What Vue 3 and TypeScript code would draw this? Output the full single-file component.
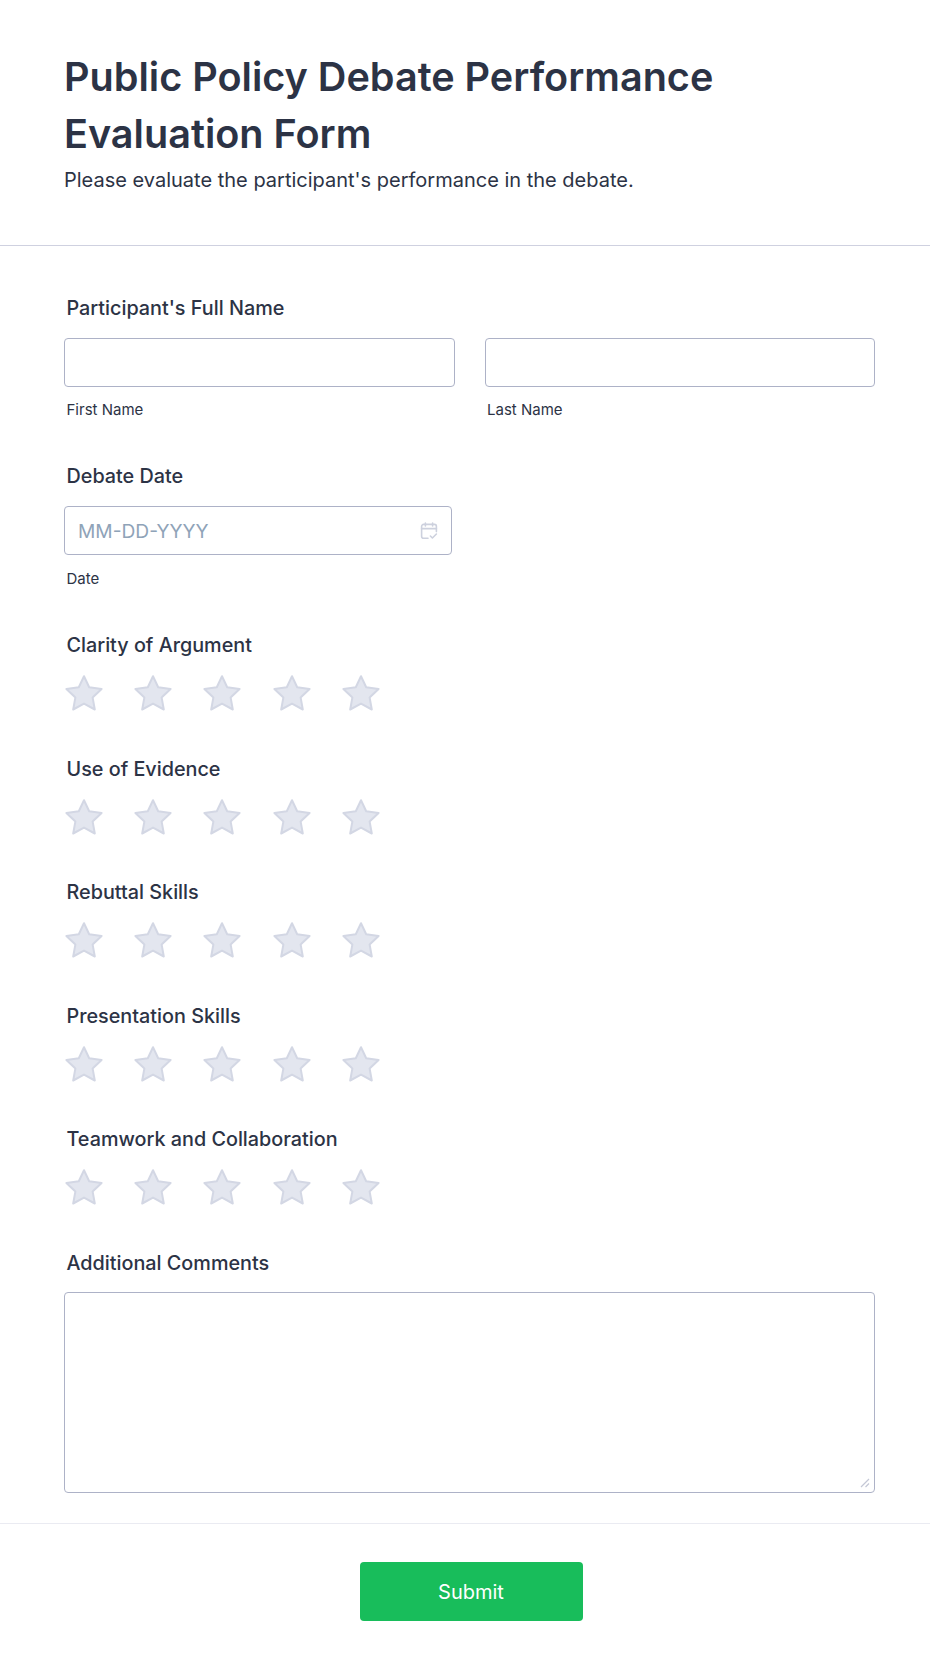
<script setup lang="ts">
const ratings = [
  'Clarity of Argument',
  'Use of Evidence',
  'Rebuttal Skills',
  'Presentation Skills',
  'Teamwork and Collaboration',
]
const stars = [1, 2, 3, 4, 5]
</script>

<template>
  <main class="form">
    <header class="form-header">
      <h1>Public Policy Debate Performance Evaluation Form</h1>
      <p>Please evaluate the participant's performance in the debate.</p>
    </header>

    <section class="form-body">
      <div class="field field-name">
        <label class="field-label">Participant's Full Name</label>
        <div class="name-row">
          <div class="name-col">
            <input class="text-input" type="text" aria-label="First Name" />
            <span class="sublabel">First Name</span>
          </div>
          <div class="name-col">
            <input class="text-input" type="text" aria-label="Last Name" />
            <span class="sublabel">Last Name</span>
          </div>
        </div>
      </div>

      <div class="field field-date">
        <label class="field-label">Debate Date</label>
        <div class="date-box">
          <span class="date-placeholder">MM-DD-YYYY</span>
          <svg class="date-icon" width="18" height="18" viewBox="0 0 18 18" fill="none" stroke="#cdd1de" stroke-width="1.6" stroke-linecap="round" stroke-linejoin="round">
            <path d="M8 16.2H3.6a2 2 0 0 1-2-2V4.4a2 2 0 0 1 2-2h10.8a2 2 0 0 1 2 2v5.2" />
            <path d="M1.6 6.6h14.8M5.4 1v3M12.6 1v3" />
            <path d="M10.4 14l2 2 4-4" />
          </svg>
        </div>
        <span class="sublabel sublabel-date">Date</span>
      </div>

      <div v-for="name in ratings" :key="name" class="field field-rating">
        <label class="field-label">{{ name }}</label>
        <div class="star-row">
          <svg v-for="n in stars" :key="n" class="star" width="40" height="38" viewBox="0 0 40 38">
            <path
              d="M20 2.2l5.2 11 12.4 1.7-9 8.5 2.2 12.1L20 29.6 9.2 35.5l2.2-12.1-9-8.5 12.4-1.7z"
              fill="#e3e6ef"
              stroke="#d3d7e4"
              stroke-width="2"
              stroke-linejoin="round"
            />
          </svg>
        </div>
      </div>

      <div class="field field-comments">
        <label class="field-label">Additional Comments</label>
        <div class="comments">
          <svg class="resize-grip" width="10" height="10" viewBox="0 0 10 10" fill="none" stroke="#c4c8d6" stroke-width="1.2">
            <path d="M1 9l8-8M5.5 9L9 5.5" />
          </svg>
        </div>
      </div>
    </section>

    <footer class="form-footer">
      <button class="submit" type="button">Submit</button>
    </footer>
  </main>
</template>

<style scoped>
.form {
  width: 930px;
  height: 1671px;
  overflow: hidden;
  background: #fff;
  color: #2c3345;
  font-family: Inter, "Liberation Sans", sans-serif;
}

.form-header {
  height: 246px;
  padding: 49px 64px 0;
  border-bottom: 1px solid #cfd1e0;
  box-sizing: border-box;
}

.form-header h1 {
  margin: 0;
  width: 720px;
  font-size: 39.6px;
  line-height: 57px;
  font-weight: 600;
}

.form-header p {
  margin: 2px 0 0;
  font-size: 20px;
  line-height: 30px;
}

.form-body {
  padding: 0 55px 0 64px;
}

.field-label {
  display: block;
  margin-left: 2.5px;
  font-size: 19.8px;
  line-height: 24px;
  font-weight: 500;
}

.field-name {
  padding-top: 50px;
}

.name-row {
  display: flex;
  gap: 30px;
  margin-top: 18px;
}

.name-col {
  flex: 1;
  min-width: 0;
}

.text-input {
  display: block;
  width: 100%;
  height: 49px;
  box-sizing: border-box;
  border: 1px solid #adb2c7;
  border-radius: 4px;
  background: #fff;
}

.sublabel {
  display: block;
  margin: 14px 0 0 2.5px;
  font-size: 15px;
  line-height: 18px;
}

.sublabel-date {
  margin-top: 15px;
}

.field-date {
  margin-top: 45px;
}

.date-box {
  display: flex;
  align-items: center;
  justify-content: space-between;
  width: 388px;
  height: 49px;
  margin-top: 18px;
  padding: 0 13px;
  box-sizing: border-box;
  border: 1px solid #adb2c7;
  border-radius: 4px;
}

.date-placeholder {
  font-size: 19.2px;
  color: #8fa3b8;
}

.field-rating {
  margin-top: 44.6px;
}

.field-date + .field-rating {
  margin-top: 45px;
}

.star-row {
  display: flex;
  gap: 29.2px;
  margin-top: 17px;
}

.star {
  display: block;
}

.field-comments {
  margin-top: 44.6px;
}

.comments {
  position: relative;
  height: 201px;
  margin-top: 17px;
  box-sizing: border-box;
  border: 1px solid #adb2c7;
  border-radius: 4px;
  background: #fff;
}

.resize-grip {
  position: absolute;
  right: 4px;
  bottom: 4px;
}

.form-footer {
  display: flex;
  justify-content: center;
  margin-top: 30px;
  padding: 38px 0 0 12px;
  border-top: 1px solid #eaebf2;
}

.submit {
  width: 223px;
  height: 59px;
  padding: 2px 0 0;
  border: 0;
  border-radius: 4px;
  background: #18bd5b;
  color: #fff;
  font-family: inherit;
  font-size: 20px;
  font-weight: 400;
}
</style>
